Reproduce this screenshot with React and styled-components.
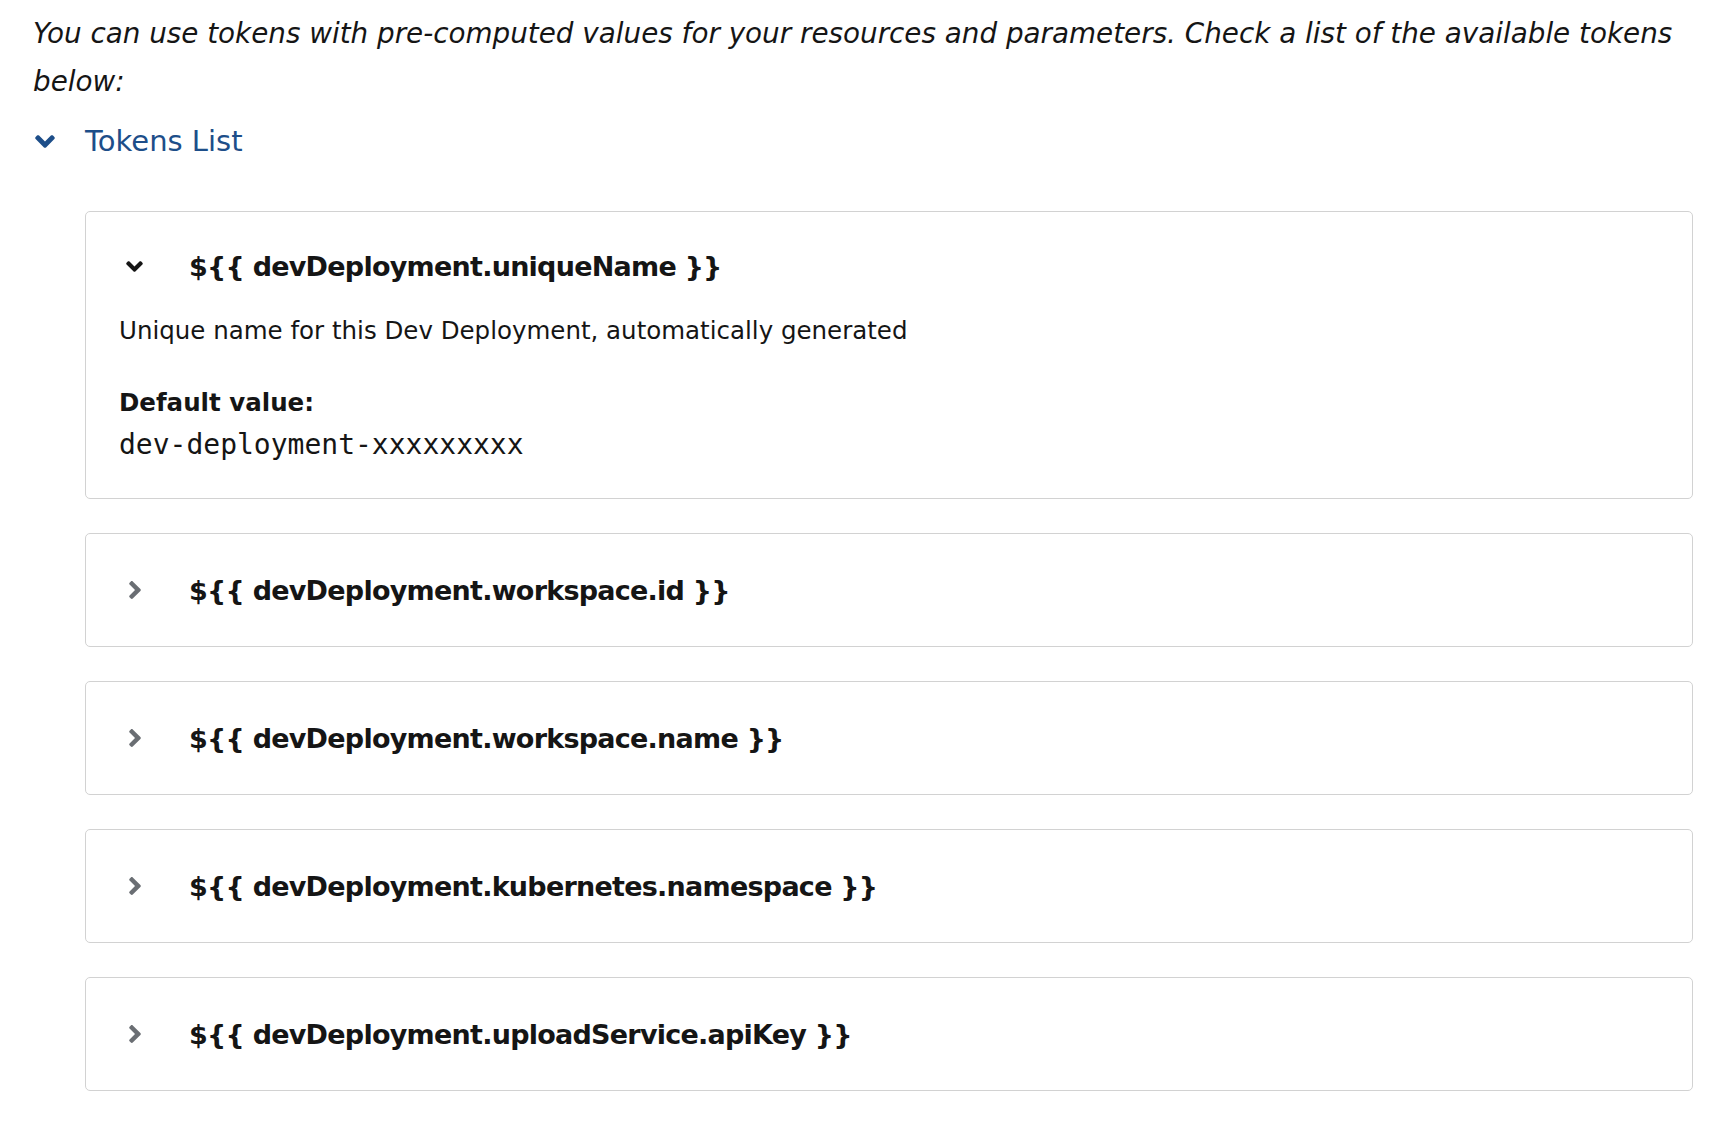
import React from "react";
import styled, { createGlobalStyle } from "styled-components";

const GlobalStyle = createGlobalStyle`
  html, body { margin: 0; padding: 0; background: #ffffff; }
  body {
    font-family: "DejaVu Sans", "Open Sans", sans-serif;
    color: #151515;
  }
`;

const Page = styled.div`
  padding: 10px 8px 40px 33px;
`;

const Intro = styled.p`
  margin: 0;
  font-size: 27.8px;
  line-height: 48px;
  font-style: italic;
`;

const SectionToggle = styled.button`
  display: flex;
  align-items: center;
  gap: 30px;
  height: 40px;
  margin: 15px 0 0 2px;
  padding: 0;
  border: 0;
  background: none;
  cursor: pointer;
  font-family: inherit;
  font-size: 29px;
  color: #1d4e89;
`;

const CardList = styled.div`
  display: flex;
  flex-direction: column;
  gap: 34px;
  margin: 50px 31px 0 52px;
`;

const Card = styled.div`
  border: 1px solid #d2d2d2;
  border-radius: 5px;
  padding: 0 33px;
`;

const CardToggle = styled.div`
  box-sizing: border-box;
  display: flex;
  align-items: center;
  gap: 46px;
  height: ${(p) => (p.$open ? "104px" : "112px")};
  padding: ${(p) => (p.$open ? "5px 0 0 7px" : "0 0 0 7px")};
`;

const ChevronBox = styled.span`
  display: flex;
  align-items: center;
  justify-content: center;
  width: 17px;
  color: ${(p) => (p.$open ? "#151515" : "#6a6e73")};
`;

const Title = styled.span`
  font-size: 27px;
  font-weight: 700;
  letter-spacing: -0.75px;
`;

const Description = styled.div`
  font-size: 24.5px;
  line-height: 30px;
`;

const Term = styled.div`
  margin-top: 37px;
  font-size: 24.5px;
  font-weight: 700;
  line-height: 40px;
`;

const Value = styled.div`
  margin-top: 2px;
  padding-bottom: 33px;
  font-family: "DejaVu Sans Mono", "Liberation Mono", monospace;
  font-size: 28px;
  line-height: 40px;
`;

const AngleDown = ({ width }) => (
  <svg width={width} height={Math.round(width * 0.66)} viewBox="0 150 320 212" fill="currentColor">
    <path d="M143 352.3L7 216.3c-9.4-9.4-9.4-24.6 0-33.9l22.6-22.6c9.4-9.4 24.6-9.4 33.9 0l96.4 96.4 96.4-96.4c9.4-9.4 24.6-9.4 33.9 0l22.6 22.6c9.4 9.4 9.4 24.6 0 33.9l-136 136c-9.2 9.4-24.4 9.4-33.8 0z" />
  </svg>
);

const AngleRight = () => (
  <svg width="12" height="18" viewBox="24 96 208 320" fill="currentColor">
    <path d="M224.3 273l-136 136c-9.4 9.4-24.6 9.4-33.9 0l-22.6-22.6c-9.4-9.4-9.4-24.6 0-33.9l96.4-96.4-96.4-96.4c-9.4-9.4-9.4-24.6 0-33.9L54.3 103c9.4-9.4 24.6-9.4 33.9 0l136 136c9.5 9.4 9.5 24.6.1 34z" />
  </svg>
);

const tokens = [
  {
    name: "devDeployment.uniqueName",
    open: true,
    description: "Unique name for this Dev Deployment, automatically generated",
    defaultValue: "dev-deployment-xxxxxxxxx",
  },
  { name: "devDeployment.workspace.id" },
  { name: "devDeployment.workspace.name" },
  { name: "devDeployment.kubernetes.namespace" },
  { name: "devDeployment.uploadService.apiKey" },
];

export default function App() {
  return (
    <>
      <GlobalStyle />
      <Page>
        <Intro>
          You can use tokens with pre-computed values for your resources and parameters. Check a list of the available
          tokens below:
        </Intro>
        <SectionToggle>
          <AngleDown width={20} />
          <span>Tokens List</span>
        </SectionToggle>
        <CardList>
          {tokens.map((t) => (
            <Card key={t.name}>
              <CardToggle $open={t.open}>
                <ChevronBox $open={t.open}>{t.open ? <AngleDown width={17} /> : <AngleRight />}</ChevronBox>
                <Title>{"${{ " + t.name + " }}"}</Title>
              </CardToggle>
              {t.open && (
                <>
                  <Description>{t.description}</Description>
                  <Term>Default value:</Term>
                  <Value>{t.defaultValue}</Value>
                </>
              )}
            </Card>
          ))}
        </CardList>
      </Page>
    </>
  );
}
